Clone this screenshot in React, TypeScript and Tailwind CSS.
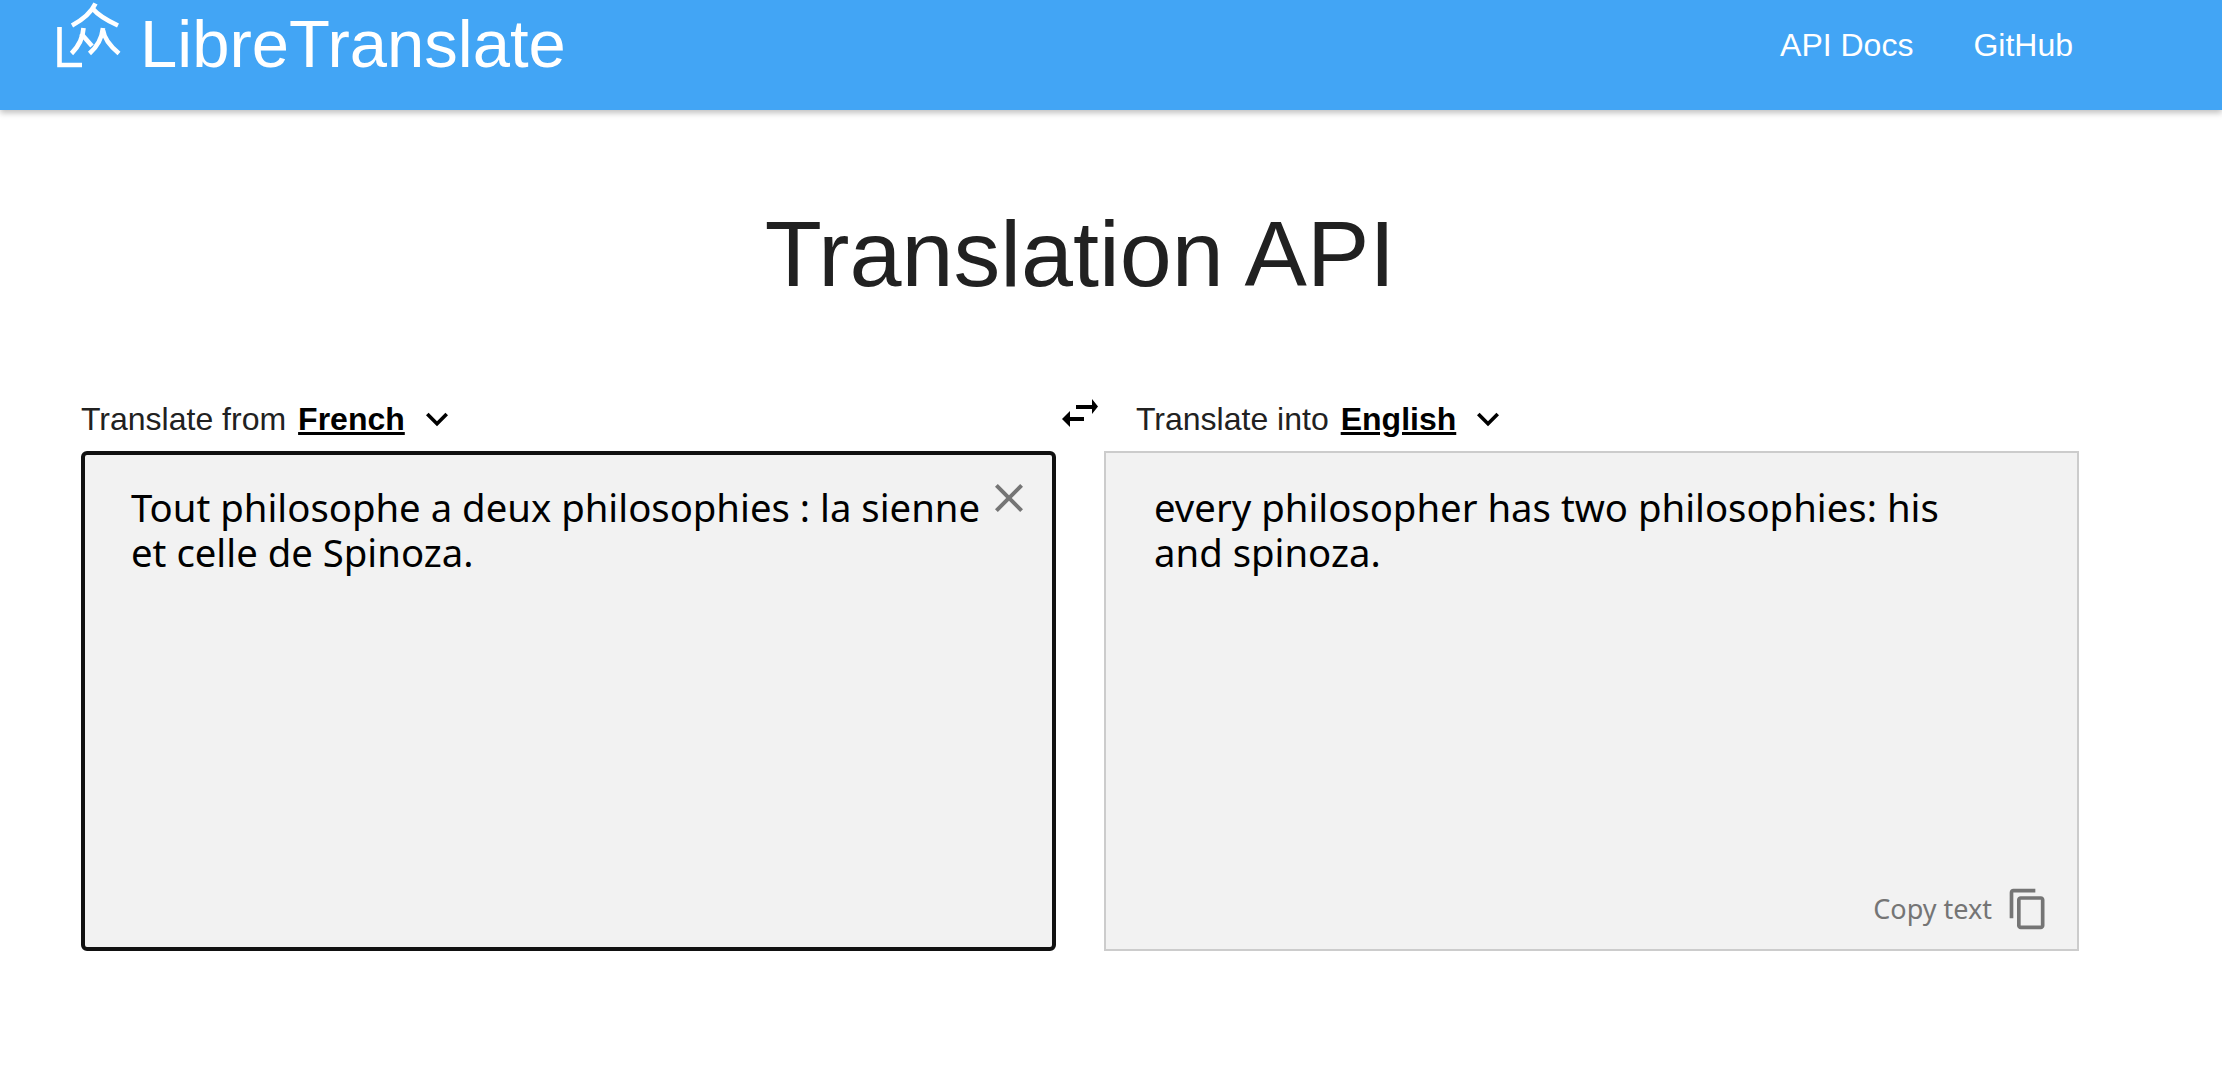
import React from 'react';

function LogoMark() {
  return (
    <svg width="66" height="70" viewBox="55 0 66 70" fill="none" stroke="white" strokeWidth="4.6" className="shrink-0">
      <path d="M59.5 27V65H82" />
      <path d="M95.5 3.5C91 13 84 19 72 25.5" />
      <path d="M93 9C98 15 106 20 118 25.5" />
      <path d="M83.5 28C83 37 79 46 71.5 53.5" />
      <path d="M81 33.5L92 46" />
      <path d="M103 28C102 37 98 46 89.5 53.5" />
      <path d="M103 30C104 38 110 46 119 53.5" />
    </svg>
  );
}

function Chevron() {
  return (
    <svg width="44" height="44" viewBox="0 0 24 24" fill="currentColor">
      <path d="M16.59 8.59L12 13.17 7.41 8.59 6 10l6 6 6-6z" />
    </svg>
  );
}

function LangLabel({ label, lang }: { label: string; lang: string }) {
  return (
    <div className="flex h-[40px] items-center text-[32px] text-[#212121]">
      <span>{label}</span>
      <span className="ml-[12px] font-bold text-black underline">{lang}</span>
      <span className="ml-[10px] text-black"><Chevron /></span>
    </div>
  );
}

export default function App() {
  return (
    <div className="min-h-[1085px] bg-white font-['Liberation_Sans',sans-serif] text-[#212121]">
      {/* Top nav */}
      <nav className="flex h-[110px] items-start justify-between bg-[#42a5f5] pl-[55px] pr-[149px] text-white shadow-[0_3px_6px_rgba(0,0,0,0.25)]">
        <div className="flex items-start">
          <LogoMark />
          <span className="ml-[19px] mt-[1px] text-[67px] leading-[86px]">LibreTranslate</span>
        </div>
        <div className="flex gap-[60px] pt-[24px] text-[32px] leading-[42px]">
          <span>API Docs</span>
          <span>GitHub</span>
        </div>
      </nav>

      <main className="ml-[81px] w-[1998px]">
        <h1 className="pt-[89px] text-center text-[93.5px] leading-[110px]">Translation API</h1>

        {/* Language selectors */}
        <div className="relative mt-[90px] grid grid-cols-2 gap-[48px]">
          <LangLabel label="Translate from" lang="French" />
          <div className="pl-[32px]">
            <LangLabel label="Translate into" lang="English" />
          </div>
          <svg width="36" height="28" viewBox="0 0 36 28" fill="black" className="absolute left-[981px] top-0">
            <path d="M14 6H30V0L36 7.5 30 15V10H14z" />
            <path d="M22 18H8V12L0 20 8 28V22H22z" />
          </svg>
        </div>

        {/* Text panels */}
        <div className="mt-[12px] grid grid-cols-2 gap-[48px] font-['Noto_Sans',sans-serif] text-[38.3px] leading-[45px] text-black">
          <div className="relative h-[500px] rounded-[6px] border-[4px] border-[#111] bg-[#f2f2f2] pl-[46px] pr-[60px] pt-[30px]">
            <p>Tout philosophe a deux philosophies : la sienne et celle de Spinoza.</p>
            <svg width="48" height="48" viewBox="0 0 24 24" fill="#757575" className="absolute right-[19px] top-[19px]">
              <path d="M19 6.41L17.59 5 12 10.59 6.41 5 5 6.41 10.59 12 5 17.59 6.41 19 12 13.41 17.59 19 19 17.59 13.41 12z" />
            </svg>
          </div>
          <div className="relative h-[500px] border-[2px] border-[#ccc] bg-[#f2f2f2] pl-[48px] pr-[120px] pt-[32px]">
            <p>every philosopher has two philosophies: his and spinoza.</p>
            <div className="absolute bottom-[18px] right-[27px] flex items-center gap-[14px] text-[#757575]">
              <span className="text-[27px] leading-[36px]">Copy text</span>
              <svg width="44" height="44" viewBox="0 0 24 24" fill="currentColor">
                <path d="M16 1H4c-1.1 0-2 .9-2 2v14h2V3h12V1zm3 4H8c-1.1 0-2 .9-2 2v14c0 1.1.9 2 2 2h11c1.1 0 2-.9 2-2V7c0-1.1-.9-2-2-2zm0 16H8V7h11v14z" />
              </svg>
            </div>
          </div>
        </div>
      </main>
    </div>
  );
}
